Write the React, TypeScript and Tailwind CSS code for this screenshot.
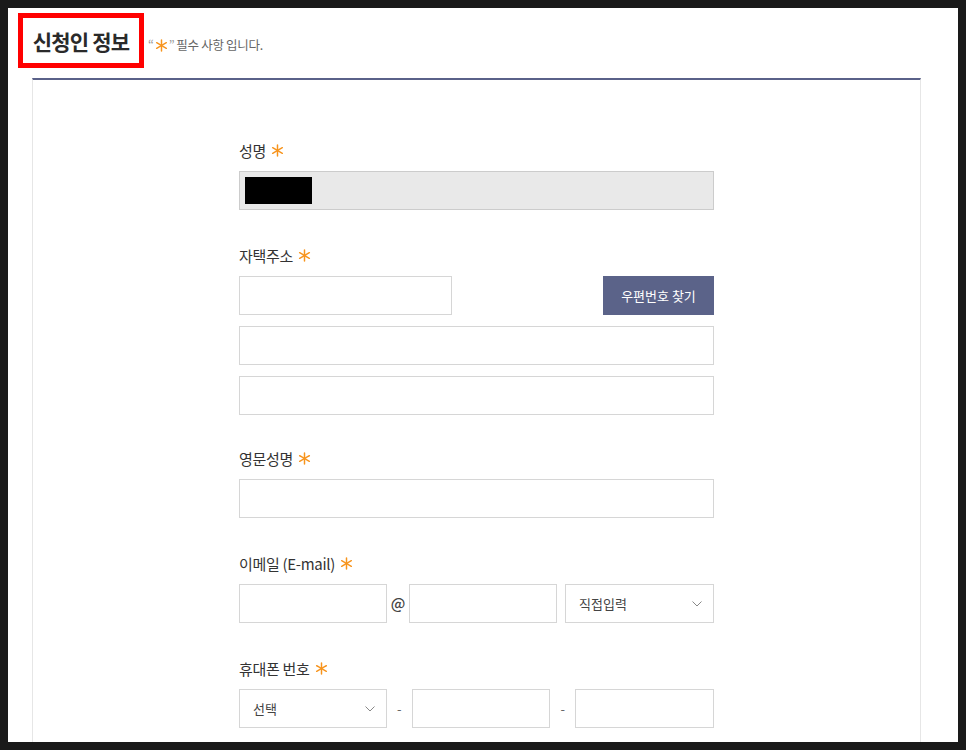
import React from 'react';

const FONT = "font-['Noto_Sans_CJK_KR','Noto_Sans',sans-serif]";

const Star = ({ className = 'ml-[5px] -mt-[2px]' }: { className?: string }) => (
  <svg viewBox="0 0 14 14" className={`w-[13px] h-[13px] inline-block ${className}`} aria-hidden>
    <g stroke="#f7941d" strokeWidth="1.6" strokeLinecap="round">
      <line x1="7" y1="1" x2="7" y2="13" />
      <line x1="1.8" y1="4" x2="12.2" y2="10" />
      <line x1="1.8" y1="10" x2="12.2" y2="4" />
    </g>
  </svg>
);

const Chevron = () => (
  <svg viewBox="0 0 10 6" className="w-[10px] h-[6px]" aria-hidden>
    <path d="M0.5 0.5 L5 5 L9.5 0.5" fill="none" stroke="#888" strokeWidth="1" />
  </svg>
);

const Label = ({ children }: { children: React.ReactNode }) => (
  <div className="h-5 mb-[10px] flex items-center text-[15px] text-[#333] leading-5 tracking-[-0.3px]">
    <span>{children}</span>
    <Star />
  </div>
);

const Box = ({ className = '' }: { className?: string }) => (
  <div className={`h-[39px] border border-[#d6d6d6] bg-white ${className}`} />
);

const Select = ({ text, className = 'w-[148px]' }: { text: string; className?: string }) => (
  <div className={`h-[39px] border border-[#d6d6d6] bg-white flex items-center justify-between pl-[13px] pr-[11px] text-[13px] text-[#444] ${className}`}>
    <span>{text}</span>
    <Chevron />
  </div>
);

export default function App() {
  return (
    <div className={`bg-[#1a1a1a] p-2 ${FONT}`}>
      <div className="bg-white h-[734px] overflow-hidden">
        {/* Title */}
        <div className="flex items-end pt-[5px] pl-[10px]">
          <div className="border-[5px] border-[#ff0000] w-[126px] h-[55px] flex items-center justify-center">
            <h2 className="text-[21px] font-bold text-[#2a2a2a] tracking-[-0.8px] mt-[2px]">신청인 정보</h2>
          </div>
          <p className="ml-[4px] mb-[13px] text-[12.5px] text-[#666] flex items-center tracking-[-0.3px]">
            <span className="text-[#999]">“</span>
            <Star className="w-[12px] h-[12px] mx-[1px]" />
            <span className="text-[#999]">”</span>
            <span className="ml-[2px]">필수 사항 입니다.</span>
          </p>
        </div>

        {/* Card */}
        <div className="mt-[10px] ml-[24px] w-[889px] border-t-2 border-t-[#5a6189] border-x border-x-[#e6e6e6] h-[700px]">
          <div className="w-[475px] mx-auto pt-[61px]">
            <Label>성명</Label>
            <div className="h-[39px] border border-[#cccccc] bg-[#e9e9e9] flex items-center pl-[5px]">
              <div className="w-[67px] h-[27px] bg-black" />
            </div>

            <div className="mt-[36px]">
              <Label>자택주소</Label>
              <div className="flex justify-between">
                <Box className="w-[213px]" />
                <button className="h-[39px] w-[111px] bg-[#5b6389] text-white text-[13px]">우편번호 찾기</button>
              </div>
              <Box className="mt-[11px]" />
              <Box className="mt-[11px]" />
            </div>

            <div className="mt-[34px]">
              <Label>영문성명</Label>
              <Box />
            </div>

            <div className="mt-[36px]">
              <Label>이메일 (E-mail)</Label>
              <div className="flex items-center">
                <Box className="w-[148px]" />
                <span className="w-[22px] text-center text-[15px] text-[#444] font-medium">@</span>
                <Box className="w-[148px]" />
                <div className="ml-[8px]">
                  <Select text="직접입력" className="w-[149px]" />
                </div>
              </div>
            </div>

            <div className="mt-[36px]">
              <Label>휴대폰 번호</Label>
              <div className="flex items-center">
                <Select text="선택" />
                <span className="w-[25px] text-center text-[13px] text-[#666]">-</span>
                <Box className="w-[139px]" />
                <span className="w-[25px] text-center text-[13px] text-[#666]">-</span>
                <Box className="w-[139px]" />
              </div>
            </div>
          </div>
        </div>
      </div>
    </div>
  );
}
